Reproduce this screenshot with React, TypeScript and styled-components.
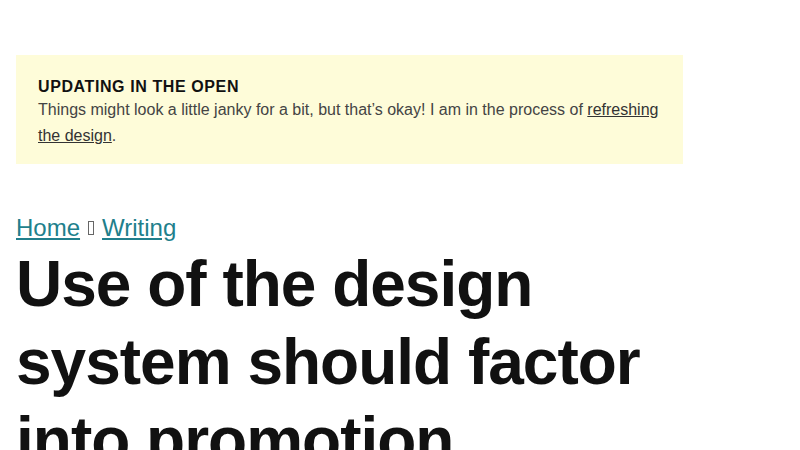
import React from "react";
import styled, { createGlobalStyle } from "styled-components";

const GlobalStyle = createGlobalStyle`
    html, body {
        margin: 0;
        padding: 0;
        background: #ffffff;
        font-family: "Liberation Sans", Arial, sans-serif;
        color: #111111;
    }
`;

const Page = styled.div`
    max-width: 667px;
    padding: 55px 16px 0;
`;

const Notice = styled.aside`
    background-color: #fefcd9;
    padding: 22px 22px 15px;
`;

const NoticeTitle = styled.h2`
    margin: 0;
    font-size: 16px;
    line-height: 20px;
    font-weight: 700;
    letter-spacing: 0.6px;
    text-transform: uppercase;
    color: #111111;
`;

const NoticeText = styled.p`
    margin: 0;
    font-size: 16px;
    line-height: 26px;
    color: #444444;

    a {
        color: #333333;
    }
`;

const Breadcrumbs = styled.nav`
    display: flex;
    align-items: baseline;
    gap: 8px;
    margin-top: 48px;
    font-size: 24px;
    line-height: 32px;
`;

const Crumb = styled.a`
    color: #217f8c;
    text-decoration: underline;
`;

// missing-glyph box shown between crumbs
const Separator = styled.span`
    display: inline-block;
    box-sizing: border-box;
    width: 6px;
    height: 14px;
    border: 1.5px solid #666666;
    transform: translateY(-1px);
`;

const Title = styled.h1`
    margin: 1px 0 0;
    font-size: 64px;
    line-height: 78px;
    font-weight: 700;
    letter-spacing: -1px;
    color: #111111;
`;

const App: React.FC = () => {
    return (
        <>
            <GlobalStyle />
            <Page>
                <Notice>
                    <NoticeTitle>Updating in the open</NoticeTitle>
                    <NoticeText>
                        Things might look a little janky for a bit, but that’s okay! I am in the process of{" "}
                        <a href="#">refreshing the design</a>.
                    </NoticeText>
                </Notice>
                <Breadcrumbs>
                    <Crumb href="#">Home</Crumb>
                    <Separator aria-hidden="true" />
                    <Crumb href="#">Writing</Crumb>
                </Breadcrumbs>
                <Title>Use of the design system should factor into promotion</Title>
            </Page>
        </>
    );
};

export default App;
